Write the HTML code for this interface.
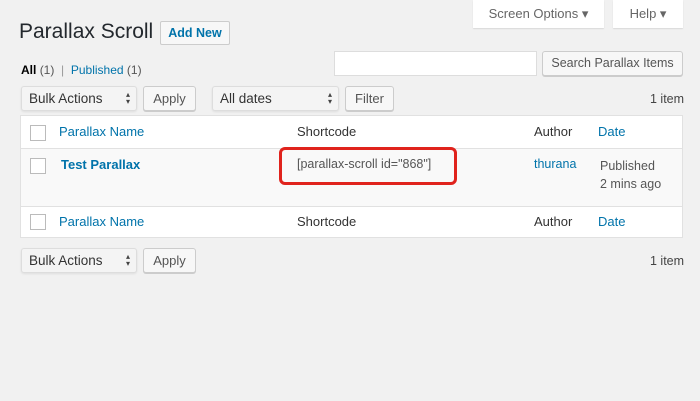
<!DOCTYPE html><html><head><style>
body{margin:0;width:700px;height:401px;background:#f1f1f1;font-family:"Liberation Sans",sans-serif;font-size:13px;color:#333;position:relative;overflow:hidden}
.a{position:absolute;white-space:nowrap}
.btn{position:absolute;background:#f7f7f7;border:1px solid #ccc;border-radius:3px;box-sizing:border-box;color:#555;font-size:13px;text-align:center;box-shadow:0 1px 0 #ccc;white-space:nowrap}
.sel{position:absolute;background:#f4f4f4;border:1px solid #ddd;border-radius:3px;box-sizing:border-box;font-size:13.5px;color:#333;padding-left:7px;box-shadow:0 1px 2px rgba(0,0,0,.08)}
.sel:after{content:"\25B4\A\25BE";white-space:pre;position:absolute;right:6px;top:4px;font-size:8px;line-height:7px;color:#444}
.cb{position:absolute;width:14px;height:14px;border:1px solid #bbb;background:#fff}
.blue{color:#0073aa}
</style></head><body>
<div class="a" style="left:473px;top:0;width:131px;height:28px;background:#fff;box-shadow:0 1px 1px rgba(0,0,0,.1);text-align:center;line-height:28px;color:#666">Screen Options ▾</div>
<div class="a" style="left:613px;top:0;width:70px;height:28px;background:#fff;box-shadow:0 1px 1px rgba(0,0,0,.1);text-align:center;line-height:28px;color:#666">Help ▾</div>
<div class="a" style="left:19px;top:20px;font-size:21px;color:#23282d">Parallax Scroll</div>
<div class="a" style="left:160px;top:21px;width:70px;height:24px;border:1px solid #ccc;background:#f7f7f7;border-radius:2px;box-sizing:border-box;text-align:center;line-height:22px;color:#0073aa;font-weight:bold;font-size:12.5px">Add New</div>
<div class="a" style="left:21px;top:63px;font-size:12px"><b style="color:#000">All</b> <span style="color:#555">(1)</span> <span style="color:#999">&nbsp;|&nbsp;</span> <span class="blue">Published</span> <span style="color:#555">(1)</span></div>
<div class="a" style="left:334px;top:51px;width:203px;height:25px;background:#fff;border:1px solid #ddd;box-sizing:border-box"></div>
<div class="btn" style="left:542px;top:51px;width:141px;height:25px;line-height:23px;font-size:12.5px">Search Parallax Items</div>
<div class="sel" style="left:21px;top:86px;width:116px;height:25px;line-height:23px">Bulk Actions</div>
<div class="btn" style="left:143px;top:86px;width:53px;height:25px;line-height:23px">Apply</div>
<div class="sel" style="left:212px;top:86px;width:127px;height:25px;line-height:23px">All dates</div>
<div class="btn" style="left:345px;top:86px;width:49px;height:25px;line-height:23px">Filter</div>
<div class="a" style="left:650px;top:92px;color:#444;font-size:12.5px">1 item</div>
<div class="a" style="left:20px;top:115px;width:663px;height:123px;background:#fff;border:1px solid #e1e1e1;box-sizing:border-box"></div>
<div class="a" style="left:21px;top:148px;width:661px;height:57px;background:#f9f9f9;border-top:1px solid #e1e1e1;border-bottom:1px solid #e1e1e1"></div>
<div class="cb" style="left:30px;top:125px"></div>
<div class="a blue" style="left:59px;top:124px">Parallax Name</div>
<div class="a" style="left:297px;top:124px">Shortcode</div>
<div class="a" style="left:534px;top:124px">Author</div>
<div class="a blue" style="left:598px;top:124px">Date</div>
<div class="cb" style="left:30px;top:158px"></div>
<div class="a blue" style="left:61px;top:157px;font-weight:bold">Test Parallax</div>
<div class="a" style="left:297px;top:157px;font-size:12.5px;color:#555">[parallax-scroll id="868"]</div>
<div class="a" style="left:279px;top:147px;width:178px;height:38px;border:3px solid #e0231d;border-radius:6px;box-sizing:border-box"></div>
<div class="a blue" style="left:534px;top:157px;font-size:12.5px">thurana</div>
<div class="a" style="left:600px;top:157px;font-size:12.5px;line-height:18px;color:#555">Published<br>2 mins ago</div>
<div class="cb" style="left:30px;top:214px"></div>
<div class="a blue" style="left:59px;top:214px">Parallax Name</div>
<div class="a" style="left:297px;top:214px">Shortcode</div>
<div class="a" style="left:534px;top:214px">Author</div>
<div class="a blue" style="left:598px;top:214px">Date</div>
<div class="sel" style="left:21px;top:248px;width:116px;height:25px;line-height:23px">Bulk Actions</div>
<div class="btn" style="left:143px;top:248px;width:53px;height:25px;line-height:23px">Apply</div>
<div class="a" style="left:650px;top:254px;color:#444;font-size:12.5px">1 item</div>
</body></html>
